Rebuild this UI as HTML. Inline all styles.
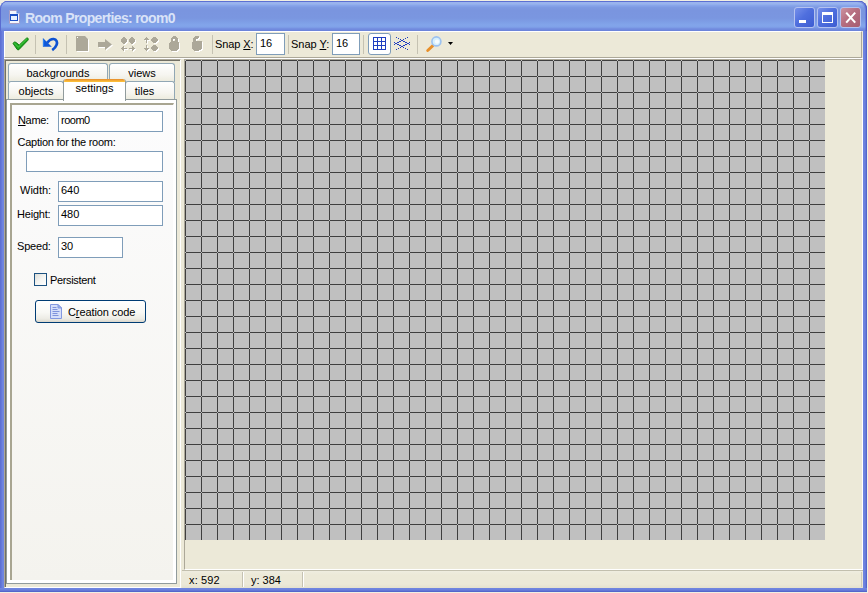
<!DOCTYPE html>
<html>
<head>
<meta charset="utf-8">
<title>Room Properties: room0</title>
<style>
html,body{margin:0;padding:0;}
body{width:868px;height:593px;overflow:hidden;background:#ece9d8;font-family:"Liberation Sans",sans-serif;font-size:11px;color:#000;position:relative;}
.abs{position:absolute;}
#win{position:absolute;left:0;top:0;width:868px;height:593px;background:#f1efe2;overflow:hidden;}
#frame{position:absolute;left:0;top:1px;width:867px;height:591px;background:#6a7ed9;border-radius:8px 8px 0 0;box-sizing:border-box;border-right:1px solid #4c5ec6;border-bottom:1px solid #4c5ec6;}
#title{position:absolute;left:0;top:1px;width:867px;height:30px;border-radius:8px 8px 0 0;box-shadow:inset -1px 0 0 #4a55c6, inset -2px 1px 0 rgba(74,85,198,0.35), inset 1px 0 0 #5a6cd1;
background:linear-gradient(to bottom,#6078d6 0px,#6c86dc 1px,#9ab4ee 1.5px,#98b3ed 3px,#88a5ea 4.5px,#7d99e2 6.5px,#7a95df 9px,#7a96e0 17px,#7e9ee6 21px,#82a5ea 24px,#80a2e9 26px,#7590e1 27.5px,#6e87dc 29px,#6a81d8 30px);}
#ttext{position:absolute;left:25px;top:10px;font-weight:bold;font-size:14px;color:#d9e3f8;white-space:nowrap;letter-spacing:-0.65px;}
#client{position:absolute;left:4px;top:31px;width:859px;height:557px;background:#ece9d8;}
.lbl{position:absolute;white-space:nowrap;font-size:11px;line-height:13px;}
.edit{position:absolute;background:#fff;border:1px solid #7f9db9;box-sizing:border-box;font-size:11px;line-height:13px;white-space:nowrap;}
.edit span{position:absolute;left:3px;top:2px;}
u{text-decoration:underline;}
.tab{position:absolute;box-sizing:border-box;border:1px solid #91a7b4;border-bottom:none;border-radius:3px 3px 0 0;background:linear-gradient(to bottom,#ffffff 0,#f6f5f0 60%,#eceadc 100%);text-align:center;font-size:11px;line-height:13px;white-space:nowrap;}
.sep{position:absolute;width:1px;background:#c5c2b2;top:3px;height:19px;}

.cbtn{position:absolute;top:7px;width:21px;height:21px;border:1px solid #b4c2f0;border-radius:3px;box-sizing:border-box;}
#toolbar{position:absolute;left:4px;top:31px;width:858px;height:27px;box-sizing:border-box;border:1px solid;border-color:#fff #aca899 #aca899 #fff;background:#ece9d8;}
#left{position:absolute;left:4px;top:59px;width:177px;height:529px;box-sizing:border-box;border:1px solid;border-color:#aca899 #fff #fff #aca899;box-shadow:inset 1px 1px 0 #716f64;background:#ece9d8;}
#room{position:absolute;left:184px;top:59px;width:679px;height:511px;box-sizing:border-box;border:1px solid;border-color:#aca899 #fff #fff #aca899;background:#ece9d8;overflow:hidden;}
#grid{position:absolute;left:0;top:0;width:640px;height:480px;background-color:#c0c0c0;
background-image:linear-gradient(to right,#2a2a2a 1px,transparent 1px),linear-gradient(to bottom,#2a2a2a 1px,transparent 1px);background-size:16px 16px;}
#status{position:absolute;left:182px;top:570px;width:681px;height:18px;box-sizing:border-box;border-top:1px solid #c2bfae;background:linear-gradient(to bottom,#efede0 0,#ece9d8 4px,#ece9d8 13px,#e4e1cf 17px);}
.ssep{position:absolute;top:1px;width:2px;height:15px;border-left:1px solid #c5c2b2;border-right:1px solid #fff;box-sizing:border-box;}
</style>
</head>
<body>
<div id="win">
<div id="frame"></div>
<div class="abs" style="left:0;top:31px;width:4px;height:561px;background:linear-gradient(to right,#5a6cd1 0,#6478d9 1.5px,#7187e1 3px,#6d83de 4px);"></div>
<div class="abs" style="left:863px;top:31px;width:4px;height:561px;background:linear-gradient(to right,#6f85e0 0,#6c81dd 2px,#5f72d4 3px,#4a5ac4 4px);"></div>
<div class="abs" style="left:0;top:588px;width:867px;height:4px;background:linear-gradient(to bottom,#7187e1 0,#6c81dd 1.5px,#5f72d4 3px,#4a5ac4 4px);"></div>
<div id="title"></div>
<!-- title icon -->
<svg class="abs" style="left:8px;top:9px" width="13" height="16" viewBox="0 0 13 16">
<path d="M1.5 1.5 H8.5 L11.5 4.5 V14.5 H1.5 Z" fill="#f4f6fd" stroke="#a79cc4" stroke-width="1"/>
<path d="M8.5 1.5 L11.5 4.5 H8.5 Z" fill="#5e8ee8"/>
<rect x="2.5" y="5.5" width="7" height="6" fill="#e8f0ff" stroke="#1c4fc4" stroke-width="1"/>
<rect x="2" y="5" width="8" height="2" fill="#1c4fc4"/>
</svg>
<div id="ttext">Room Properties: room0</div>
<!-- caption buttons -->
<div class="cbtn" style="left:794px;background:linear-gradient(135deg,#7690ea 0%,#4f6fde 45%,#3d5dd2 100%);"><div class="abs" style="left:4px;top:12px;width:7px;height:3px;background:#fff;"></div></div>
<div class="cbtn" style="left:817px;background:linear-gradient(135deg,#7690ea 0%,#4f6fde 45%,#3d5dd2 100%);"><div class="abs" style="left:4px;top:4px;width:11px;height:11px;box-sizing:border-box;border:1px solid #fff;border-top:3px solid #fff;"></div></div>
<div class="cbtn" style="left:840px;background:linear-gradient(135deg,#cc92a0 0%,#b66e80 45%,#a65c70 100%);">
<svg class="abs" style="left:0px;top:0px" width="19" height="19" viewBox="0 0 19 19"><path d="M5.2 4.6 L14.2 14.6 M14.2 4.6 L5.2 14.6" stroke="#fff" stroke-width="2.1" stroke-linecap="butt"/></svg></div>

<div id="client"></div>
<!-- toolbar -->
<div id="toolbar"><div class="abs" style="left:-1px;top:0px;width:858px;height:26px;">
<div class="abs" id="gridbtn" style="left:364px;top:1px;width:23px;height:22px;box-sizing:border-box;border:1px solid #7f9db9;border-radius:3px;background:#fff;"></div>
<svg class="abs" style="left:-4px;top:0" width="868" height="26" viewBox="0 32 868 26">
<defs>
<g id="dis">
<!-- page -->
<path d="M76 36 H85 L88 39 V51 H76 Z"/>
<!-- arrow -->
<path d="M98 42 H105 V39 L112 44.5 L105 50 V47 H98 Z"/>
<!-- dots, arrows, locks (pixel shapes) -->
<path shape-rendering="crispEdges" d="M123 37h2v1h-2zM122 38h4v1h-4zM121 39h6v1h-6zM121 40h6v1h-6zM121 41h6v1h-6zM122 42h4v1h-4zM123 43h2v1h-2zM131 37h2v1h-2zM130 38h4v1h-4zM129 39h6v1h-6zM129 40h6v1h-6zM129 41h6v1h-6zM130 42h4v1h-4zM131 43h2v1h-2zM121 48h6v1h-6zM129 48h6v1h-6zM122 47h2v1h-2zM132 47h2v1h-2zM122 49h2v1h-2zM132 49h2v1h-2zM123 46h1v1h-1zM132 46h1v1h-1zM123 50h1v1h-1zM132 50h1v1h-1zM153 37h3v1h-3zM152 38h5v1h-5zM151 39h7v1h-7zM151 40h7v1h-7zM152 41h5v1h-5zM153 42h3v1h-3zM153 45h3v1h-3zM152 46h5v1h-5zM151 47h7v1h-7zM151 48h7v1h-7zM152 49h5v1h-5zM153 50h3v1h-3zM146 37h1v1h-1zM145 38h3v1h-3zM144 39h5v1h-5zM146 40h1v1h-1zM146 41h1v1h-1zM146 42h1v1h-1zM146 45h1v1h-1zM146 46h1v1h-1zM146 47h1v1h-1zM144 48h5v1h-5zM145 49h3v1h-3zM146 50h1v1h-1zM173 36h3v1h-3zM172 37h5v1h-5zM171 38h7v1h-7zM171 39h2v1h-2zM175 39h3v1h-3zM171 40h2v1h-2zM175 40h3v1h-3zM171 41h7v1h-7zM170 42h9v1h-9zM169 43h10v1h-10zM169 44h10v1h-10zM169 45h10v1h-10zM169 46h10v1h-10zM169 47h10v1h-10zM169 48h10v1h-10zM170 49h8v1h-8zM171 50h6v1h-6zM195 36h4v1h-4zM194 37h5v1h-5zM193 38h5v1h-5zM193 39h3v1h-3zM193 40h3v1h-3zM193 41h9v1h-9zM192 42h10v1h-10zM192 43h10v1h-10zM192 44h10v1h-10zM192 45h10v1h-10zM192 46h10v1h-10zM192 47h10v1h-10zM192 48h10v1h-10zM193 49h8v1h-8zM194 50h5v1h-5z"/>
</g>
</defs>
<use href="#dis" transform="translate(1,1)" fill="#ffffff"/>
<use href="#dis" fill="#aca899"/>
<rect x="77" y="37" width="1" height="1" fill="#fff"/>
<!-- check -->
<path d="M13.1 43.6 Q13 42.6 14.8 41.9 Q15.8 41.8 19.2 45.1 L26.4 38.2 Q27.6 37.6 28.2 38.5 Q28.5 39.4 28 40.2 L18.9 49.7 Q18 50.2 17.2 49.5 Z" fill="#1fa21f" stroke="#0e7d0e" stroke-width="0.9" stroke-linejoin="round"/>
<path d="M14.6 43.4 L18.4 47.2 L26.6 39.2" fill="none" stroke="#3cc43c" stroke-width="1.1" stroke-linecap="round" stroke-linejoin="round"/>
<!-- undo -->
<path d="M47.2 42.8 C49.4 39.8 51.8 38.9 53.6 39 C56.6 39.3 57.5 42.2 56.7 44.7 C55.9 47.1 54.2 48.8 52.2 50.1" fill="none" stroke="#0d52d2" stroke-width="2.7"/>
<path d="M42.9 38 L42.9 46.8 L51.8 46.8 Z" fill="#0f58d8"/>
<path d="M43.6 39.5 V46" stroke="#2f86f4" stroke-width="1" fill="none"/>
<!-- grid icon -->
<path d="M373.5 37 V50 M377.5 37 V50 M381.5 37 V50 M385.5 37 V50 M373 37.5 H386 M373 41.5 H386 M373 45.5 H386 M373 49.5 H386" stroke="#1f3fc0" stroke-width="1" fill="none"/>
<!-- iso grid icon -->
<path d="M396 37h1v1h-1zM407 37h1v1h-1zM398 38h1v1h-1zM405 38h1v1h-1zM400 39h1v1h-1zM403 39h1v1h-1zM401 40h1v1h-1zM402 40h1v1h-1zM399 41h1v1h-1zM400 41h1v1h-1zM403 41h1v1h-1zM404 41h1v1h-1zM394 42h1v1h-1zM397 42h1v1h-1zM398 42h1v1h-1zM405 42h1v1h-1zM406 42h1v1h-1zM409 42h1v1h-1zM395 43h1v1h-1zM396 43h1v1h-1zM407 43h1v1h-1zM408 43h1v1h-1zM394 44h1v1h-1zM397 44h1v1h-1zM398 44h1v1h-1zM405 44h1v1h-1zM406 44h1v1h-1zM409 44h1v1h-1zM399 45h1v1h-1zM400 45h1v1h-1zM403 45h1v1h-1zM404 45h1v1h-1zM401 46h1v1h-1zM402 46h1v1h-1zM400 47h1v1h-1zM403 47h1v1h-1zM398 48h1v1h-1zM405 48h1v1h-1zM396 49h1v1h-1zM407 49h1v1h-1z" fill="#1c3cc0" shape-rendering="crispEdges"/>
<!-- magnifier -->
<path d="M432.6 45.9 L427.7 50.5" stroke="#e8902a" stroke-width="2.9" stroke-linecap="round"/>
<circle cx="436.4" cy="41.4" r="4.5" fill="#d6f0fc" stroke="#9cc2f0" stroke-width="1.6"/><circle cx="437" cy="41.6" r="2.2" fill="#ffffff" opacity="0.75"/>
<!-- dropdown -->
<path d="M448 42 H453 L450.5 45 Z" fill="#000"/>
</svg>
<div class="sep" style="left:31px"></div>
<div class="sep" style="left:62px"></div>
<div class="sep" style="left:208px"></div>
<div class="lbl" style="left:211px;top:6px;letter-spacing:-0.1px;">Snap <u>X</u>:</div>
<div class="edit" style="left:252px;top:1px;width:29px;height:22px;"><span style="top:3px;">16</span></div>
<div class="sep" style="left:284px"></div>
<div class="lbl" style="left:287px;top:6px;">Snap <u>Y</u>:</div>
<div class="edit" style="left:328px;top:1px;width:28px;height:22px;"><span style="top:3px;">16</span></div>
<div class="sep" style="left:359px"></div>
<div class="sep" style="left:413px"></div>
</div></div>
<div class="abs" style="left:4px;top:58px;width:859px;height:1px;background:#fff;"></div>
<!-- left panel -->
<div id="left"></div>
<!-- tabs (page coords) -->
<div class="tab" style="left:8px;top:63px;width:100px;height:19px;padding-top:3px;">backgrounds</div>
<div class="tab" style="left:109px;top:63px;width:66px;height:19px;padding-top:3px;">views</div>
<div class="tab" style="left:8px;top:81px;width:56px;height:19px;padding-top:3px;">objects</div>
<div class="tab" style="left:125px;top:81px;width:50px;height:19px;padding-top:3px;padding-right:11px;">tiles</div>
<!-- tab page -->
<div class="abs" style="left:6px;top:99px;width:171px;height:485px;box-sizing:border-box;border:1px solid #919b9c;background:#fff;"></div>
<div class="abs" style="left:10px;top:103px;width:164px;height:477px;box-sizing:border-box;border:0 solid #a8a591;border-width:2px 0 0 2px;border-right:1px solid #fff;background:linear-gradient(to bottom,#fcfcfd 0,#f4f3ee 100%);"></div>
<!-- selected tab -->
<div class="abs" style="left:63px;top:79px;width:63px;height:22px;box-sizing:border-box;border:1px solid #919b9c;border-bottom:none;border-top:none;border-radius:3px 3px 0 0;background:#fff;text-align:center;line-height:13px;padding-top:3px;overflow:hidden;">settings<div class="abs" style="left:-1px;top:0;width:63px;height:3px;background:linear-gradient(to bottom,#e68b2c 0,#ffc73c 100%);border-radius:3px 3px 0 0;"></div></div>
<!-- form -->
<div class="lbl" style="left:18px;top:114px;letter-spacing:-0.35px;"><u>N</u>ame:</div>
<div class="edit" style="left:58px;top:111px;width:105px;height:21px;"><span style="left:2px;letter-spacing:-0.5px;">room0</span></div>
<div class="lbl" style="left:17.5px;top:136px;letter-spacing:-0.25px;">Caption for the room:</div>
<div class="edit" style="left:26px;top:151px;width:137px;height:21px;"></div>
<div class="lbl" style="left:20px;top:184px;">Width:</div>
<div class="edit" style="left:58px;top:181px;width:105px;height:21px;"><span style="left:2px;">640</span></div>
<div class="lbl" style="left:17px;top:208px;letter-spacing:-0.2px;">Height:</div>
<div class="edit" style="left:58px;top:205px;width:105px;height:21px;"><span style="left:2px;">480</span></div>
<div class="lbl" style="left:17px;top:240px;letter-spacing:-0.2px;">Speed:</div>
<div class="edit" style="left:58px;top:237px;width:65px;height:21px;"><span style="left:2px;">30</span></div>
<div class="abs" style="left:34px;top:273px;width:13px;height:13px;box-sizing:border-box;border:1px solid #1c5180;background:linear-gradient(135deg,#dcdcd7 0%,#f4f4f1 50%,#ffffff 100%);"></div>
<div class="lbl" style="left:50px;top:274px;letter-spacing:-0.35px;">Persistent</div>
<!-- button -->
<div class="abs" id="btn" style="left:35px;top:300px;width:111px;height:23px;box-sizing:border-box;border:1px solid #003c74;border-radius:3px;background:linear-gradient(to bottom,#ffffff 0,#f8f8f4 55%,#ecebe4 85%,#dad7cc 100%);"></div>
<svg class="abs" style="left:49px;top:303px" width="14" height="17" viewBox="0 0 14 17">
<path d="M1.5 1.5 H9 L12.5 5 V15.5 H1.5 Z" fill="#d6dffa" stroke="#8398e0" stroke-width="1"/>
<path d="M9 1.5 V5 H12.5 Z" fill="#9fb6f0" stroke="#8398e0" stroke-width="1" stroke-linejoin="round"/>
<path d="M3.5 4.5 H7.5 M3.5 6.5 H8.5 M3.5 8.5 H10.5 M3.5 10.5 H8.5 M3.5 12.5 H9.5" stroke="#7f93dc" stroke-width="1"/>
</svg>
<div class="lbl" style="left:68px;top:306px;letter-spacing:-0.1px;">C<u>r</u>eation code</div>
<!-- room area -->
<div id="room"><svg class="abs" style="left:0;top:0" width="640" height="480" viewBox="0 0 640 480" shape-rendering="crispEdges"><defs><pattern id="gp" width="16" height="16" patternUnits="userSpaceOnUse"><rect width="16" height="16" fill="#c0c0c0"/><rect x="1" y="0" width="15" height="1" fill="#3f3f3f"/><rect x="0" y="1" width="1" height="15" fill="#3f3f3f"/></pattern></defs><rect width="640" height="480" fill="url(#gp)"/></svg></div>
<!-- status bar -->
<div id="status">
<div class="lbl" style="left:7px;top:3px;letter-spacing:0.15px;">x: 592</div>
<div class="lbl" style="left:69px;top:3px;">y: 384</div>
<div class="ssep" style="left:60px"></div>
<div class="ssep" style="left:120px"></div>
<div class="abs" style="left:679px;top:1px;width:1px;height:15px;background:#cfccba;"></div>
</div>
</div>
</body>
</html>
